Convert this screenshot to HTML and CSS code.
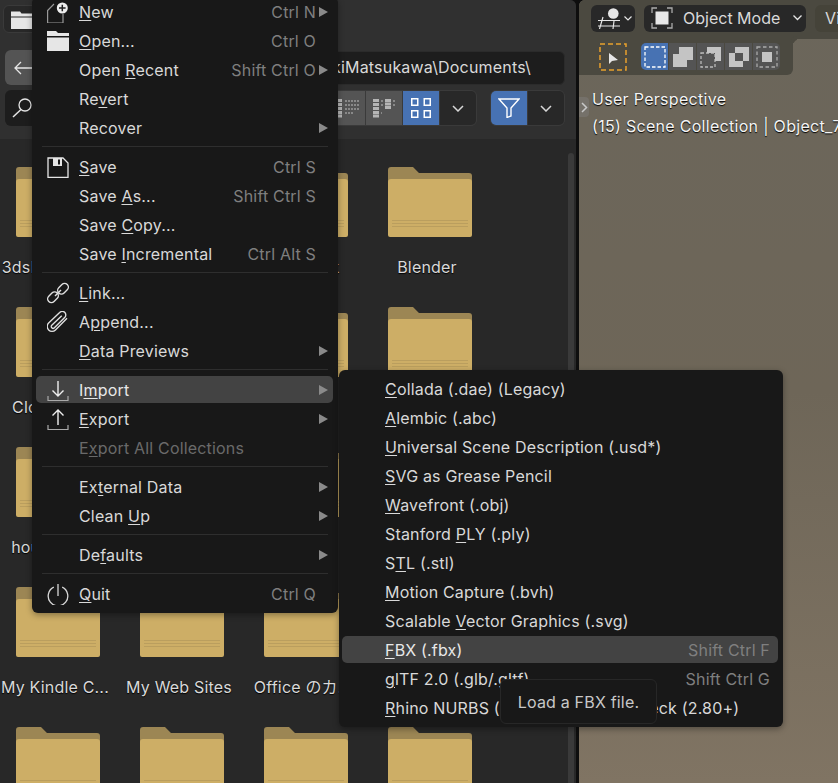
FILE: index.html
```html
<!DOCTYPE html>
<html lang="en">
<head>
    <meta charset="UTF-8">
    <meta name="viewport" content="width=device-width, initial-scale=1.0">
    <title>Blender - File Import Menu</title>
    <link rel="stylesheet" href="styles.css">
</head>
<body>
    <svg class="defs" width="0" height="0">
        <symbol id="folder" viewBox="0 0 84 70">
            <path d="M0 3a3 3 0 0 1 3-3h22l6 6h50a3 3 0 0 1 3 3v10H0z" fill="#9c8654"/>
            <path d="M0 15a3 3 0 0 1 3-3h78a3 3 0 0 1 3 3v53a2 2 0 0 1-2 2H2a2 2 0 0 1-2-2z" fill="#cdae66"/>
            <path d="M4 53.5h76M4 56.5h76M4 59.5h76" stroke="#ba9e5e" stroke-width="1"/>
        </symbol>
    </svg>

    <div class="window">
        <div class="browser">
            <div class="browser-head">
                <div class="head-row">
                    <div class="editor-btn">
                        <svg width="22" height="20" viewBox="0 0 22 20"><path d="M0 2.5h9l1.5 2H22v3H0z" fill="#e6e6e6"/><path d="M0 8.5h22V20H0z" fill="#e6e6e6"/></svg>
                    </div>
                </div>
                <div class="head-row nav-row">
                    <div class="back-btn">
                        <svg width="20" height="16" viewBox="0 0 20 16"><path d="M20 8H2M8 2 2 8l6 6" fill="none" stroke="#e6e6e6" stroke-width="1.3"/></svg>
                    </div>
                    <div class="path-field">C:\Users\MasakiMatsukawa\Documents\</div>
                </div>
                <div class="head-row tools-row">
                    <div class="search-field">
                        <svg width="20" height="20" viewBox="0 0 20 20"><circle cx="13" cy="7" r="6" fill="none" stroke="#e6e6e6" stroke-width="1.3"/><path d="M9 11.5 1 19" stroke="#e6e6e6" stroke-width="1.5"/></svg>
                    </div>
                    <div class="btn-group view-group">
                        <div class="group-btn grey">
                            <svg width="24" height="20" viewBox="0 0 24 20"><path d="M3 2.5h4M3 6.5h4M3 10.5h4M3 14.5h4M3 18h4" stroke="#b5b5b5" stroke-width="3"/><path d="M10 3h14M10 7h14M10 11h14M10 15h9" stroke="#9a9a9a" stroke-width="1.5" stroke-dasharray="2 1"/></svg>
                        </div>
                        <div class="group-btn grey">
                            <svg width="24" height="20" viewBox="0 0 24 20"><path d="M1 2.5h6M1 6.5h6M1 10.5h6M1 14.5h6M1 18h6" stroke="#b5b5b5" stroke-width="3"/><path d="M13 2.5h6M13 6h6M13 9.5h6" stroke="#b5b5b5" stroke-width="3"/><path d="M9 3h2M9 7h2M9 15h1M21 3h2M21 7h2" stroke="#9a9a9a" stroke-width="1.5"/></svg>
                        </div>
                        <div class="group-btn blue">
                            <svg width="20" height="20" viewBox="0 0 20 20"><g fill="none" stroke="#fff" stroke-width="1.5"><rect x="0.75" y="0.75" width="6" height="6.5"/><rect x="13.25" y="0.75" width="6" height="6.5"/><rect x="0.75" y="12.75" width="6" height="6.5"/><rect x="13.25" y="12.75" width="6" height="6.5"/></g></svg>
                        </div>
                        <div class="group-btn">
                            <svg class="chev" width="12" height="7" viewBox="0 0 12 7"><path d="m1 1 5 5 5-5" fill="none" stroke="#d8d8d8" stroke-width="1.5"/></svg>
                        </div>
                    </div>
                    <div class="btn-group">
                        <div class="group-btn blue">
                            <svg width="22" height="20" viewBox="0 0 22 20"><path d="M1 1h20l-8 9v8l-4 1.5V10z" fill="none" stroke="#fff" stroke-width="1.4"/></svg>
                        </div>
                        <div class="group-btn">
                            <svg class="chev" width="12" height="7" viewBox="0 0 12 7"><path d="m1 1 5 5 5-5" fill="none" stroke="#d8d8d8" stroke-width="1.5"/></svg>
                        </div>
                    </div>
                </div>
            </div>
            <div class="files">
                <div class="file-grid">
                    <div class="file"><svg class="folder"><use href="#folder"/></svg><span class="file-name">3dsMax 2024</span></div>
                    <div class="file"><svg class="folder"><use href="#folder"/></svg><span class="file-name">Adobe</span></div>
                    <div class="file"><svg class="folder"><use href="#folder"/></svg><span class="file-name">Autodesk</span></div>
                    <div class="file"><svg class="folder"><use href="#folder"/></svg><span class="file-name">Blender</span></div>
                    <div class="file"><svg class="folder"><use href="#folder"/></svg><span class="file-name">Cloud Files</span></div>
                    <div class="file"><svg class="folder"><use href="#folder"/></svg><span class="file-name">Custom</span></div>
                    <div class="file"><svg class="folder"><use href="#folder"/></svg><span class="file-name">Games</span></div>
                    <div class="file"><svg class="folder"><use href="#folder"/></svg><span class="file-name">GitHub</span></div>
                    <div class="file"><svg class="folder"><use href="#folder"/></svg><span class="file-name">houdini19.5</span></div>
                    <div class="file"><svg class="folder"><use href="#folder"/></svg><span class="file-name">Maya</span></div>
                    <div class="file"><svg class="folder"><use href="#folder"/></svg><span class="file-name">Maxon</span></div>
                    <div class="file"><svg class="folder"><use href="#folder"/></svg><span class="file-name">Music</span></div>
                    <div class="file"><svg class="folder"><use href="#folder"/></svg><span class="file-name">My Kindle C...</span></div>
                    <div class="file"><svg class="folder"><use href="#folder"/></svg><span class="file-name">My Web Sites</span></div>
                    <div class="file"><svg class="folder"><use href="#folder"/></svg><span class="file-name">Office のカ...</span></div>
                    <div class="file"><svg class="folder"><use href="#folder"/></svg><span class="file-name">Outlook</span></div>
                    <div class="file"><svg class="folder"><use href="#folder"/></svg></div>
                    <div class="file"><svg class="folder"><use href="#folder"/></svg></div>
                    <div class="file"><svg class="folder"><use href="#folder"/></svg></div>
                    <div class="file"><svg class="folder"><use href="#folder"/></svg></div>
                </div>
                <div class="scrollbar"></div>
            </div>
        </div>

        <div class="viewport">
            <div class="vp-head">
                <div class="vp-btn type-btn">
                    <svg width="25" height="22" viewBox="0 0 25 22"><circle cx="15.3" cy="6.5" r="5.3" fill="#e6e6e6"/><path d="M0 13.5h22M0 19h22M5 10 1.5 22M16 14l-1 8" stroke="#e6e6e6" stroke-width="1.2" fill="none"/></svg>
                    <svg width="8" height="5" viewBox="0 0 8 5"><path d="m.5.5 3.5 3.5L7.500.5" fill="none" stroke="#e6e6e6" stroke-width="1.2"/></svg>
                </div>
                <div class="vp-btn mode-btn">
                    <svg width="22" height="22" viewBox="0 0 22 22"><path d="M1 6V1h5M16 1h5v5M21 16v5h-5M6 21H1v-5" fill="none" stroke="#aaa" stroke-width="1.3"/><rect x="4.5" y="4.5" width="13" height="13" fill="#e8e8e8"/></svg>
                    <span class="mode-label">Object Mode</span>
                    <svg width="9" height="6" viewBox="0 0 9 6"><path d="m.5.5 4 4 4-4" fill="none" stroke="#e6e6e6" stroke-width="1.3"/></svg>
                </div>
                <div class="vp-btn view-btn">View</div>
            </div>
            <div class="vp-tools">
                <svg class="select-icon" width="28" height="28" viewBox="0 0 28 28"><rect x="1" y="1" width="26" height="26" fill="none" stroke="#e8a12c" stroke-width="1.5" stroke-dasharray="5 3"/><path d="M10 10v11l3-3 6-1z" fill="#e6e6e6"/></svg>
                <div class="mode-group">
                    <div class="mode-cell active"><svg width="22" height="22" viewBox="0 0 22 22"><rect x="1" y="1" width="20" height="20" fill="none" stroke="#fff" stroke-width="1.3" stroke-dasharray="3.5 2"/></svg></div>
                    <div class="mode-cell"><svg width="22" height="22" viewBox="0 0 22 22"><path d="M7 1h14v13h-6v7H1V8h6z" fill="#c4c4c4"/></svg></div>
                    <div class="mode-cell"><svg width="22" height="22" viewBox="0 0 22 22"><rect x="1" y="7" width="14" height="14" fill="none" stroke="#bbb" stroke-width="1.3" stroke-dasharray="3 2"/><path d="M7 1h14v14h-6V7H7z" fill="#c4c4c4"/></svg></div>
                    <div class="mode-cell"><svg width="22" height="22" viewBox="0 0 22 22"><path d="M7 1h14v14h-6V7H7z" fill="#c4c4c4"/><path d="M1 7h6v8h8v6H1z" fill="#c4c4c4"/></svg></div>
                    <div class="mode-cell"><svg width="22" height="22" viewBox="0 0 22 22"><rect x="1" y="1" width="20" height="20" fill="none" stroke="#aaa" stroke-width="1.3" stroke-dasharray="3.5 2.5"/><rect x="6" y="6" width="10" height="10" fill="#c4c4c4"/></svg></div>
                </div>
            </div>
            <div class="vp-info">
                <div class="side-tab">
                    <svg width="7" height="11" viewBox="0 0 7 11"><path d="m1 1 4.5 4.5L1 10" fill="none" stroke="#c8c8c8" stroke-width="1.5"/></svg>
                </div>
                <div class="info-text">
                    <div>User Perspective</div>
                    <div>(15) Scene Collection | Object_7</div>
                </div>
            </div>
        </div>
    </div>

    <div class="menu main-menu">
        <div class="item more">
            <svg class="icon" viewBox="0 0 22 22"><path d="M7 3 .6 9.500V22H16V13" fill="none" stroke="#999" stroke-width="1.2"/><circle cx="15.3" cy="7" r="5.5" fill="#eee"/><path d="M12 7h6.600M15.300 3.700v6.600" stroke="#222" stroke-width="1.5"/></svg>
            <span class="label"><u>N</u>ew</span><span class="keys">Ctrl N</span>
        </div>
        <div class="item">
            <svg class="icon" viewBox="0 0 22 22"><path d="M0 1h9l2 2h11v3H0z" fill="#e6e6e6"/><path d="M0 7.5h22V21H0z" fill="#e6e6e6"/></svg>
            <span class="label"><u>O</u>pen...</span><span class="keys">Ctrl O</span>
        </div>
        <div class="item more"><span class="icon"></span><span class="label">Open <u>R</u>ecent</span><span class="keys">Shift Ctrl O</span></div>
        <div class="item"><span class="icon"></span><span class="label">Re<u>v</u>ert</span></div>
        <div class="item more"><span class="icon"></span><span class="label">Recover</span></div>
        <div class="sep"></div>
        <div class="item">
            <svg class="icon" viewBox="0 0 22 22"><path d="M1 2h15l5 5v14.500H1z" fill="none" stroke="#e6e6e6" stroke-width="1.3"/><path d="M6 2h9v8H6z" fill="#e6e6e6"/><path d="M11 3.500h2v5h-2z" fill="#181818"/></svg>
            <span class="label"><u>S</u>ave</span><span class="keys">Ctrl S</span>
        </div>
        <div class="item"><span class="icon"></span><span class="label">Save <u>A</u>s...</span><span class="keys">Shift Ctrl S</span></div>
        <div class="item"><span class="icon"></span><span class="label">Save <u>C</u>opy...</span></div>
        <div class="item"><span class="icon"></span><span class="label">Save <u>I</u>ncremental</span><span class="keys">Ctrl Alt S</span></div>
        <div class="sep"></div>
        <div class="item">
            <svg class="icon" viewBox="0 0 22 22"><g fill="none" stroke="#e0e0e0" stroke-width="1.4"><rect x="10" y="3" width="12" height="7.500" rx="3.750" transform="rotate(-45 16 6.750)"/><rect x="0" y="11.500" width="12" height="7.500" rx="3.750" transform="rotate(-45 6 15.250)"/><path d="M8 14 14 8"/></g></svg>
            <span class="label"><u>L</u>ink...</span>
        </div>
        <div class="item">
            <svg class="icon" viewBox="0 0 22 22"><path d="M20 7 9 18a4.500 4.500 0 0 1-6.500-6.500L13 1.500a3 3 0 0 1 5 4.500L8 16a1.500 1.500 0 0 1-2.500-2.500L15 4.500" transform="translate(-1 0) scale(1.05)" fill="none" stroke="#e0e0e0" stroke-width="1.3"/></svg>
            <span class="label">A<u>p</u>pend...</span>
        </div>
        <div class="item more"><span class="icon"></span><span class="label"><u>D</u>ata Previews</span></div>
        <div class="sep"></div>
        <div class="item hover more">
            <svg class="icon" viewBox="0 0 22 22"><path d="M11 2v15M5.500 11.500 11 17l5.500-5.500" fill="none" stroke="#eee" stroke-width="1.4"/><path d="M1 17v4.500h20V17" fill="none" stroke="#aaa" stroke-width="1.2"/></svg>
            <span class="label">I<u>m</u>port</span>
        </div>
        <div class="item more">
            <svg class="icon" viewBox="0 0 22 22"><path d="M11 17V2M5.500 7.500 11 2l5.500 5.500" fill="none" stroke="#eee" stroke-width="1.4"/><path d="M1 17v4.500h20V17" fill="none" stroke="#aaa" stroke-width="1.2"/></svg>
            <span class="label"><u>E</u>xport</span>
        </div>
        <div class="item off"><span class="icon"></span><span class="label">E<u>x</u>port All Collections</span></div>
        <div class="sep"></div>
        <div class="item more"><span class="icon"></span><span class="label">Ex<u>t</u>ernal Data</span></div>
        <div class="item more"><span class="icon"></span><span class="label">Clean <u>U</u>p</span></div>
        <div class="sep"></div>
        <div class="item more"><span class="icon"></span><span class="label">De<u>f</u>aults</span></div>
        <div class="sep"></div>
        <div class="item">
            <svg class="icon" viewBox="0 0 22 22"><path d="M6.800 4.200a9.800 9.800 0 1 0 8.400 0" fill="none" stroke="#d8d8d8" stroke-width="1.3"/><path d="M11 1v12" stroke="#d8d8d8" stroke-width="1.3"/></svg>
            <span class="label"><u>Q</u>uit</span><span class="keys">Ctrl Q</span>
        </div>
    </div>

    <div class="menu import-menu">
        <div class="item"><span class="label"><u>C</u>ollada (.dae) (Legacy)</span></div>
        <div class="item"><span class="label"><u>A</u>lembic (.abc)</span></div>
        <div class="item"><span class="label"><u>U</u>niversal Scene Description (.usd*)</span></div>
        <div class="item"><span class="label"><u>S</u>VG as Grease Pencil</span></div>
        <div class="item"><span class="label"><u>W</u>avefront (.obj)</span></div>
        <div class="item"><span class="label">Stanford <u>P</u>LY (.ply)</span></div>
        <div class="item"><span class="label">S<u>T</u>L (.stl)</span></div>
        <div class="item"><span class="label"><u>M</u>otion Capture (.bvh)</span></div>
        <div class="item"><span class="label">Scalable <u>V</u>ector Graphics (.svg)</span></div>
        <div class="item hover"><span class="label"><u>F</u>BX (.fbx)</span><span class="keys">Shift Ctrl F</span></div>
        <div class="item"><span class="label"><u>g</u>lTF 2.0 (.glb/.gltf)</span><span class="keys">Shift Ctrl G</span></div>
        <div class="item"><span class="label"><u>R</u>hino NURBS (.3dm) File – RhinoDeck (2.80+)</span></div>
    </div>

    <div class="tooltip">Load a FBX file.</div>
</body>
</html>
```

FILE: styles.css
```css
* {
    box-sizing: border-box;
}
body {
    margin: 0;
    width: 838px;
    height: 783px;
    overflow: hidden;
    position: relative;
    background-color: #0e0e0e;
    font-family: Inter, "Noto Sans CJK JP", sans-serif;
    font-size: 16px;
    letter-spacing: 0.18px;
    color: #d9d9d9;
}
.defs {
    position: absolute;
}
.window {
    display: flex;
    gap: 3px;
    height: 783px;
}

/* file browser */
.browser {
    width: 576px;
    display: flex;
    flex-direction: column;
    background-color: #282828;
    border-radius: 0 6px 0 0;
    overflow: hidden;
}
.browser-head {
    height: 139px;
    background-color: #303030;
    padding: 5px 11px 0 5px;
}
.head-row {
    display: flex;
    align-items: center;
}
.editor-btn {
    width: 60px;
    height: 28px;
    margin-left: -2px;
    padding-left: 7px;
    display: flex;
    align-items: center;
    background-color: #282828;
    border: 1px solid #3a3a3a;
    border-radius: 6px;
}
.nav-row {
    margin-top: 17px;
    gap: 6px;
}
.back-btn {
    width: 52px;
    height: 35px;
    padding-left: 8px;
    display: flex;
    align-items: center;
    background-color: #545454;
    border-radius: 6px;
}
.path-field {
    flex: 1;
    height: 34px;
    display: flex;
    align-items: center;
    justify-content: flex-end;
    padding: 0 33px 2px 0;
    overflow: hidden;
    white-space: nowrap;
    background-color: #1d1d1d;
    border: 1px solid #2b2b2b;
    border-radius: 6px;
}
.tools-row {
    margin-top: 5px;
}
.search-field {
    width: 200px;
    height: 36px;
    padding-left: 7px;
    display: flex;
    align-items: center;
    background-color: #1d1d1d;
    border-radius: 6px;
}
.btn-group {
    display: flex;
    gap: 1px;
    height: 36px;
    background-color: #3a3a3a;
    border: 1px solid #3a3a3a;
    border-radius: 6px;
    overflow: hidden;
}
.view-group {
    margin-left: auto;
    margin-right: 13px;
}
.group-btn {
    width: 36px;
    display: flex;
    align-items: center;
    justify-content: center;
    background-color: #282828;
}
.group-btn.grey {
    background-color: #545454;
}
.group-btn.blue {
    background-color: #4772b3;
}
.files {
    flex: 1;
    display: flex;
    justify-content: space-between;
    padding: 14px 2px 0 16px;
    overflow: hidden;
}
.file-grid {
    display: grid;
    grid-template-columns: repeat(4, 84px);
    grid-auto-rows: 140px;
    column-gap: 40px;
    padding-top: 14px;
}
.file {
    display: flex;
    flex-direction: column;
    align-items: center;
}
.folder {
    width: 84px;
    height: 70px;
    flex-shrink: 0;
}
.file-name {
    width: 124px;
    margin-top: 20px;
    padding-right: 6px;
    text-align: center;
    line-height: 20px;
    white-space: nowrap;
    text-shadow: 0 1px 1px #000;
}
.scrollbar {
    width: 6px;
    height: 640px;
    background-color: #3a3a3a;
    border-radius: 3px;
}

/* 3d viewport */
.viewport {
    flex: 1;
    min-width: 0;
    background: linear-gradient(180deg, #6b665b 0%, #6e6658 50%, #807463 100%);
    border-radius: 6px 0 0 0;
    overflow: hidden;
}
.vp-head {
    height: 39px;
    display: flex;
    gap: 9px;
    padding: 5px 0 0 12px;
    background-color: #4b4940;
}
.vp-btn {
    height: 27px;
    padding-bottom: 1px;
    display: flex;
    align-items: center;
    background-color: #282828;
    border-radius: 6px;
}
.type-btn {
    width: 44px;
    flex-shrink: 0;
    gap: 1px;
    padding-left: 7px;
}
.mode-btn {
    width: 162px;
    flex-shrink: 0;
    padding-left: 7px;
}
.mode-label {
    margin: 0 13px 0 10px;
    width: 97px;
    letter-spacing: 0;
    white-space: nowrap;
}
.view-btn {
    flex-shrink: 0;
    width: 60px;
    padding-left: 10px;
    background-color: #454339;
}
.vp-tools {
    position: relative;
    width: 214px;
    height: 36px;
    display: flex;
    gap: 14px;
    padding: 4px 0 0 20px;
    background-color: #4b4940;
    border-radius: 0 0 6px 0;
}
.vp-tools::after {
    content: "";
    position: absolute;
    left: 100%;
    top: 0;
    width: 7px;
    height: 7px;
    border-top-left-radius: 7px;
    box-shadow: -3px -3px 0 #4b4940;
}
.mode-group {
    display: flex;
    height: 27px;
    border-radius: 5px;
    overflow: hidden;
    gap: 1px;
}
.mode-cell {
    width: 27px;
    display: flex;
    align-items: center;
    justify-content: center;
    background-color: #545454;
}
.mode-cell.active {
    background-color: #4772b3;
}
.vp-info {
    display: flex;
    margin-top: 11px;
}
.side-tab {
    width: 10px;
    height: 20px;
    margin-top: 11px;
    flex-shrink: 0;
    display: flex;
    align-items: center;
    justify-content: center;
    background-color: #75716a;
    border-radius: 0 4px 4px 0;
}
.info-text {
    margin-left: 3px;
    line-height: 27px;
    white-space: nowrap;
    letter-spacing: 0.3px;
    color: #f4f4f4;
    text-shadow: 0 1px 1px #000;
}

/* popup menus */
.menu {
    position: absolute;
    display: flex;
    flex-direction: column;
    background-color: #181818;
    border-radius: 6px;
    box-shadow: 0 2px 6px rgba(0, 0, 0, 0.35);
}
.main-menu {
    left: 32px;
    top: -3px;
    width: 306px;
    padding: 0 5px 5px 4px;
}
.import-menu {
    left: 339px;
    top: 370px;
    width: 444px;
    height: 357px;
    padding: 4px 5px 0 3px;
    z-index: 1;
}
.item {
    height: 27px;
    margin: 1px 0;
    flex-shrink: 0;
    display: flex;
    align-items: center;
    padding: 0 5px 0 11px;
    white-space: nowrap;
    border-radius: 5px;
}
.item::after {
    content: "";
    width: 9px;
    margin-left: 3px;
}
.item.more::after {
    width: 0;
    height: 0;
    border-left: 9px solid #8a8a8a;
    border-top: 5px solid transparent;
    border-bottom: 5px solid transparent;
}
.item.hover {
    background-color: #434343;
    color: #e8e8e8;
}
.item.off {
    color: #6a6a6a;
}
.icon {
    width: 22px;
    height: 22px;
    margin-right: 10px;
    flex-shrink: 0;
}
.label {
    flex: 1;
}
.keys {
    color: #7f7f7f;
}
.sep {
    height: 1px;
    margin: 4px 5px 5px 6px;
    flex-shrink: 0;
    background-color: #2e2e2e;
}
.import-menu .item {
    padding: 0 8px 0 43px;
}
.import-menu .item::after {
    display: none;
}
u {
    text-underline-offset: 2px;
    text-decoration-thickness: 1px;
}
.tooltip {
    position: absolute;
    z-index: 2;
    left: 500px;
    top: 679px;
    width: 157px;
    height: 45px;
    display: flex;
    align-items: center;
    justify-content: center;
    background-color: #181818;
    border: 1px solid #272727;
    border-radius: 6px;
    color: #c8c8c8;
}
```
